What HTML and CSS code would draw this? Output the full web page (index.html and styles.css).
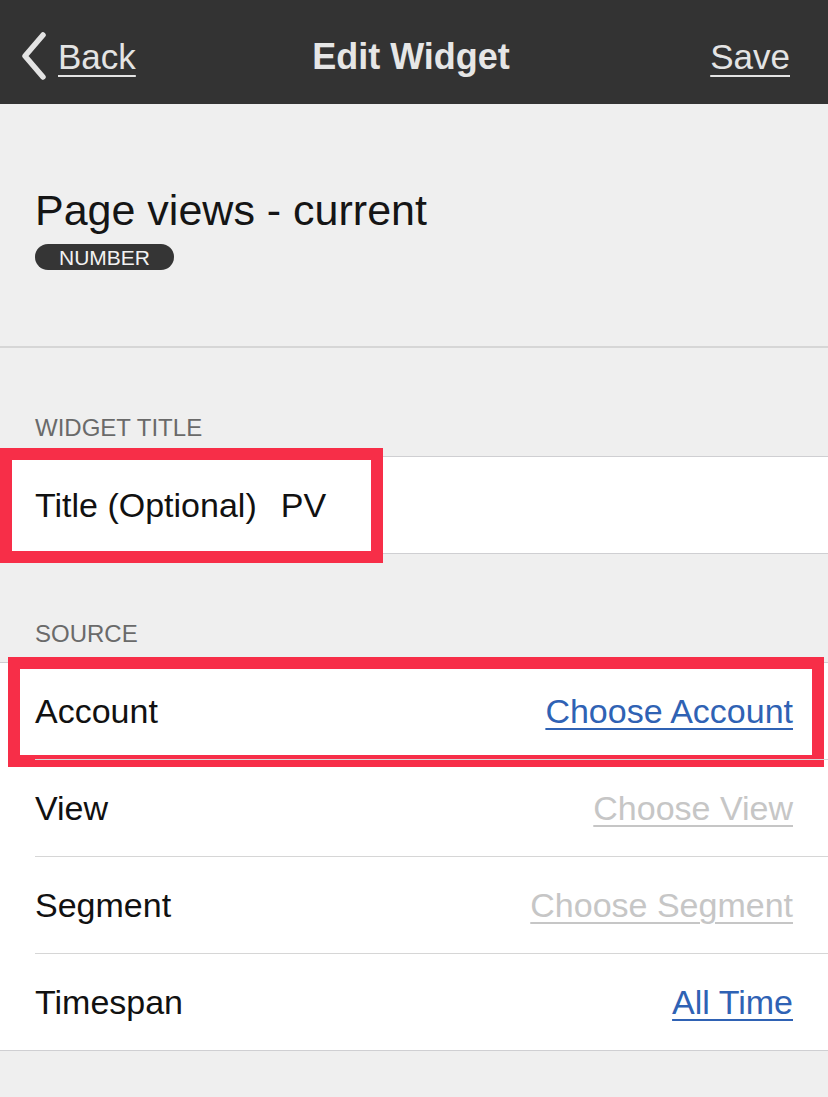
FILE: index.html
```html
<!DOCTYPE html>
<html>
<head>
<meta charset="utf-8">
<link rel="stylesheet" href="styles.css">
</head>
<body>
<header class="nav">
  <a class="nav-back">
    <svg class="chev" width="28" height="48" viewBox="0 0 28 48"><path d="M23 3 L5 24 L23 45" fill="none" stroke="#e3e3e3" stroke-width="5.5" stroke-linecap="round" stroke-linejoin="round"/></svg>
    <span class="nav-link">Back</span>
  </a>
  <h1 class="nav-title">Edit Widget</h1>
  <a class="nav-save"><span class="nav-link">Save</span></a>
</header>
<section class="hero">
  <h2 class="hero-title">Page views - current</h2>
  <span class="badge">NUMBER</span>
</section>
<div class="section-head">WIDGET TITLE</div>
<div class="group">
  <div class="row">
    <span class="label">Title (Optional)</span><span class="value">PV</span>
    <div class="mark mark-title"></div>
  </div>
</div>
<div class="section-head">SOURCE</div>
<div class="group group-source">
  <div class="row">
    <span class="label">Account</span><a class="link link-blue">Choose Account</a>
    <div class="mark mark-account"></div>
  </div>
  <div class="row">
    <span class="label">View</span><a class="link link-gray">Choose View</a>
  </div>
  <div class="row">
    <span class="label">Segment</span><a class="link link-gray">Choose Segment</a>
  </div>
  <div class="row">
    <span class="label">Timespan</span><a class="link link-blue">All Time</a>
  </div>
</div>
</body>
</html>
```
FILE: styles.css
```css
html, body {
  margin: 0;
  padding: 0;
}
body {
  width: 828px;
  min-height: 1097px;
  background: #efefef;
  font-family: "Liberation Sans", Arial, sans-serif;
  color: #111;
  overflow: hidden;
}
.nav {
  height: 104px;
  box-sizing: border-box;
  background: #333333;
  display: grid;
  grid-template-columns: 1fr auto 1fr;
  align-items: center;
  padding: 9px 38px 0 20px;
  color: #e4e4e4;
}
.nav-back {
  display: flex;
  align-items: center;
  gap: 10px;
  justify-self: start;
}
.chev {
  display: block;
  margin-top: -1px;
}
.nav-link {
  font-size: 35px;
  text-decoration: underline;
  text-decoration-thickness: 2px;
  text-underline-offset: 6px;
}
.nav-title {
  margin: 0;
  font-size: 36px;
  font-weight: bold;
  color: #e6e6e6;
  padding-left: 12px;
}
.nav-save {
  justify-self: end;
}
.hero {
  padding: 81px 35px 76px;
  border-bottom: 2px solid #d6d6d6;
}
.hero-title {
  margin: 0;
  font-size: 43px;
  font-weight: normal;
  line-height: 50px;
  color: #151515;
}
.badge {
  display: inline-block;
  margin-top: 9px;
  height: 26px;
  line-height: 27px;
  padding: 0 24px;
  background: #353535;
  color: #f2f2f2;
  font-size: 21px;
  border-radius: 13px;
}
.section-head {
  padding: 66px 35px 14px;
  font-size: 24px;
  line-height: 28px;
  color: #6a6a6a;
}
.group {
  background: #fff;
  border-top: 1px solid #cfcfd2;
  border-bottom: 1px solid #cfcfd2;
}
.row {
  position: relative;
  height: 96px;
  margin-left: 35px;
  padding-right: 35px;
  display: flex;
  align-items: center;
  font-size: 34px;
}
.group-source .row + .row {
  border-top: 1px solid #d6d6d6;
}
.label {
  color: #111;
}
.value {
  margin-left: 24px;
}
.link {
  margin-left: auto;
  text-decoration: underline;
  text-decoration-thickness: 2px;
  text-underline-offset: 5px;
}
.link-blue {
  color: #2f62b4;
}
.link-gray {
  color: #c6c6c6;
}
.mark {
  position: absolute;
  border: 12px solid #f72e48;
  box-sizing: border-box;
  pointer-events: none;
}
.mark-title {
  left: -35px;
  top: -9px;
  width: 383px;
  height: 115px;
}
.mark-account {
  left: -27px;
  top: -6px;
  width: 816px;
  height: 110px;
}
```
